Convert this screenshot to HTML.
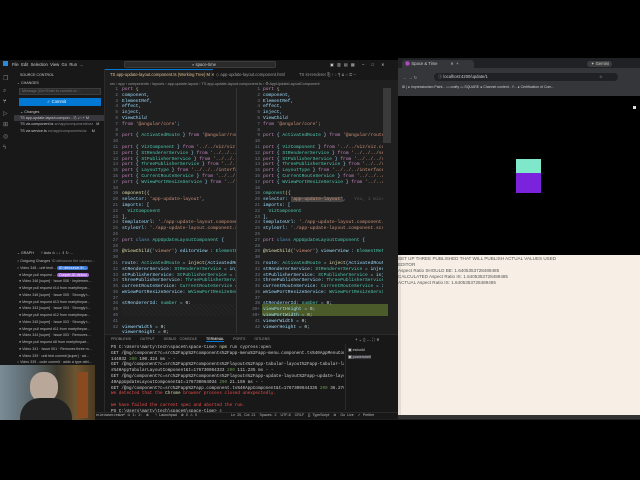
<!DOCTYPE html>
<html><head><meta charset="utf-8"><style>
*{margin:0;padding:0;box-sizing:border-box}
body{width:640px;height:480px;background:#000;position:relative;overflow:hidden;font-family:"Liberation Sans",sans-serif}
.a{position:absolute}
.code{font-family:"Liberation Mono",monospace;font-size:4.6px;line-height:5.8px;white-space:pre;color:#9cdcfe}
.ln{font-family:"Liberation Mono",monospace;font-size:4.4px;line-height:5.8px;white-space:pre;color:#6e7681;text-align:right}
.k{color:#c586c0}.s{color:#ce9178}.t{color:#4ec9b0}.y{color:#dcdcaa}.w{color:#d4d4d4}.b{color:#569cd6}
.sm{font-size:4.2px;color:#ccc;white-space:nowrap}
.term{font-family:"Liberation Mono",monospace;font-size:4.3px;line-height:5.8px;white-space:pre;color:#ccc}
</style></head><body>
<!-- VS Code -->
<div class="a" style="left:0;top:60px;width:398px;height:360px;background:#1f1f1f"></div>
<div class="a" style="left:0;top:60px;width:398px;height:9px;background:#181818"></div>
<div class="a sm" style="left:12px;top:62px;color:#ccc">File &nbsp;Edit &nbsp;Selection &nbsp;View &nbsp;Go &nbsp;Run &nbsp;…</div>
<div class="a" style="left:124px;top:61px;width:152px;height:7px;background:#2a2a2a;border:1px solid #3c3c3c;border-radius:2px"></div>
<div class="a sm" style="left:192px;top:62px">⌕ space-time</div>
<div class="a" style="left:3px;top:61px;width:5px;height:5px;background:#2c8ad6"></div>
<div class="a sm" style="left:330px;top:62px;letter-spacing:3px">▣▥▤▦ – □ ✕</div>
<!-- activity bar -->
<div class="a" style="left:0;top:69px;width:13px;height:343px;background:#181818"></div>
<div class="a" style="left:3px;top:74px;color:#888;font-size:6px;line-height:11.5px;width:8px">❐<br>⌕<br><span style="color:#ddd">⑂</span><br>▷<br>⊞<br>◎<br>ϟ</div>
<!-- sidebar -->
<div class="a" style="left:13px;top:69px;width:92px;height:343px;background:#181818;border-right:1px solid #2b2b2b"></div>
<div class="a sm" style="left:20px;top:73px;font-size:3.6px">SOURCE CONTROL</div>
<div class="a sm" style="left:17px;top:81px;font-size:3.6px">⌄ CHANGES</div>
<div class="a" style="left:19px;top:88px;width:82px;height:7px;background:#2a2a2a;border:1px solid #3c3c3c"></div>
<div class="a sm" style="left:22px;top:89px;color:#777;font-size:3.6px">Message (Ctrl+Enter to commit on '...</div>
<div class="a" style="left:19px;top:98px;width:82px;height:8px;background:#0078d4"></div>
<div class="a sm" style="left:47px;top:99px;color:#fff">✓ Commit</div>
<div class="a sm" style="left:20px;top:109px;font-size:3.8px">⌄ Changes</div>
<div class="a" style="left:14px;top:115px;width:90px;height:6px;background:#37373d"></div>
<div class="a sm" style="left:20px;top:116px;font-size:3.7px">TS app-update-layout.compon... ⎘ ↶ + M</div>
<div class="a sm" style="left:20px;top:122px;font-size:3.7px">TS viz.component.ts <span style="color:#888">src\app\components\viz</span> &nbsp;&nbsp;M</div>
<div class="a sm" style="left:20px;top:129px;font-size:3.7px">TS viz.service.ts <span style="color:#888">src\app\components\viz</span> &nbsp;&nbsp;&nbsp;&nbsp;M</div>
<div class="a sm" style="left:17px;top:251px;font-size:3.6px">⌄ GRAPH &nbsp;&nbsp;&nbsp;&nbsp;&nbsp;&nbsp;⑂ Auto ⊙ ↓ ↓ ↥ ↻ …</div>
<div class="a sm" style="left:17px;top:258px;font-size:3.6px;line-height:6.75px;color:#bbb">
○ Outgoing Changes <span style="color:#888">'ID debounce the valueso...</span><br>
○ Video 348 - unit testi... <span style="background:#3b78d8;color:#fff;border-radius:3px;padding:0 2px">ID debounce-th...</span><br>
&nbsp;&nbsp;● Merge pull request ... <span style="background:#a86ad8;color:#fff;border-radius:3px;padding:0 2px">Cooper-ID-debou</span><br>
&nbsp;&nbsp;● Video 346 [super] · Issue 006 · Implemen...<br>
&nbsp;&nbsp;● Merge pull request #14 from martythepar...<br>
&nbsp;&nbsp;● Video 346 [super] · Issue 005 · Strongly t...<br>
&nbsp;&nbsp;● Merge pull request #13 from martythepar...<br>
&nbsp;&nbsp;● Video 343 [super] · Issue 004 · Strongly t...<br>
&nbsp;&nbsp;● Merge pull request #12 from martythepar...<br>
&nbsp;&nbsp;● Video 345 [super] · Issue 003 · Strongly t...<br>
&nbsp;&nbsp;● Merge pull request #11 from martythepar...<br>
&nbsp;&nbsp;● Video 344 [super] · Issue 003 · Removes ...<br>
&nbsp;&nbsp;● Merge pull request #8 from martythepart...<br>
&nbsp;&nbsp;● Video 341 · Issue 001 · Removes three m...<br>
&nbsp;&nbsp;● Video 339 · unit test commit [super] · ad...<br>
○ Video 339 - code commit · adds a type attri...</div>
<!-- tabs -->
<div class="a" style="left:105px;top:69px;width:293px;height:11px;background:#181818"></div>
<div class="a" style="left:105px;top:69px;width:108px;height:11px;background:#1f1f1f;border-top:1px solid #0078d4"></div>
<div class="a sm" style="left:110px;top:72px;color:#e2c08d">TS app-update-layout.component.ts (Working Tree) M ✕</div>
<div class="a sm" style="left:216px;top:72px;color:#999">◇ app-update-layout.component.html</div>
<div class="a sm" style="left:299px;top:72px;color:#999">TS st-renderer ⎘ ↑ ↓ ¶ ⊛ ○ ◫ –</div>
<div class="a sm" style="left:110px;top:81px;color:#999;font-size:3.8px">src › app › components › layouts › app-update-layout › TS app-update-layout.component.ts › ⚙ AppUpdateLayoutComponent</div>
<div class="a" style="left:236px;top:88px;width:1px;height:245px;background:#333"></div>
<div class="a" style="left:383px;top:88px;width:8px;height:55px;background:#3a3a3a"></div>
<!-- left editor -->
<div class="a ln" style="left:106px;top:87px;width:12px">1
2
3
4
5
6
7
8
9
10
11
12
13
14
15
16
17
18
19
20
21
22
23
24
25
26
27
28
29
30
31
32
33
34
35
36
37
38
39
40
41
42</div>
<div class="a code" style="left:122px;top:87px;width:114px;overflow:hidden"><span class="k">port</span> <span class="y">{</span>
component,
ElementRef,
effect,
inject,
ViewChild
<span class="k">from</span> <span class="s">'@angular/core'</span>;

<span class="k">port</span> { <span class="t">ActivatedRoute</span> } <span class="k">from</span> <span class="s">'@angular/router'</span>;

<span class="k">port</span> { <span class="t">VizComponent</span> } <span class="k">from</span> <span class="s">'../../viz/viz.compon</span>
<span class="k">port</span> { <span class="t">StRendererService</span> } <span class="k">from</span> <span class="s">'../../../servic</span>
<span class="k">port</span> { <span class="t">StPublisherService</span> } <span class="k">from</span> <span class="s">'../../../servi</span>
<span class="k">port</span> { <span class="t">ThreePublisherService</span> } <span class="k">from</span> <span class="s">'../../se</span>
<span class="k">port</span> { <span class="t">LayoutType</span> } <span class="k">from</span> <span class="s">'../../../interfaces/la</span>
<span class="k">port</span> { <span class="t">CurrentRouteService</span> } <span class="k">from</span> <span class="s">'../../../serv</span>
<span class="k">port</span> { <span class="t">WViewPortResizeService</span> } <span class="k">from</span> <span class="s">'../../../s</span>

<span class="y">omponent({</span>
selector: <span class="s">'app-update-layout'</span>,
imports: [
  <span class="t">VizComponent</span>
],
templateUrl: <span class="s">'./app-update-layout.component.html</span>
styleUrl: <span class="s">'./app-update-layout.component.scss'</span>

<span class="k">port</span> <span class="b">class</span> <span class="t">AppUpdateLayoutComponent</span> {

<span class="y">@ViewChild</span>(<span class="s">'viewer'</span>) editorView : <span class="t">ElementRef</span> | u

route: <span class="t">ActivatedRoute</span> = <span class="y">inject</span>(ActivatedRoute);
stRendererService: <span class="t">StRendererService</span> = inject(St
stPublisherService: <span class="t">StPublisherService</span> = inject(
threePublisherService: <span class="t">ThreePublisherService</span> = i
currentRouteService: <span class="t">CurrentRouteService</span> = inje
wViewPortResizeService: <span class="t">WViewPortResizeService</span>

stRendererId: <span class="t">number</span> = <span class="w">0</span>;



viewerWidth = <span class="w">0</span>;
viewerHeight = <span class="w">0</span>;</div>
<div class="a" style="left:122px;top:304px;width:114px;height:12px;background:repeating-linear-gradient(45deg,#262626 0 1px,#1f1f1f 1px 3px)"></div>
<!-- right editor -->
<div class="a" style="left:262px;top:304px;width:126px;height:12px;background:#4b5b2a"></div>
<div class="a ln" style="left:248px;top:87px;width:12px">1
2
3
4
5
6
7
8
9
10
11
12
13
14
15
16
17
18
19
20
21
22
23
24
25
26
27
28
29
30
31
32
33
34
35
36
37
38
39+
40+
41
42</div>
<div class="a code" style="left:263px;top:87px;width:120px;overflow:hidden"><span class="k">port</span> <span class="y">{</span>
component,
ElementRef,
effect,
inject,
ViewChild
<span class="k">from</span> <span class="s">'@angular/core'</span>;

<span class="k">port</span> { <span class="t">ActivatedRoute</span> } <span class="k">from</span> <span class="s">'@angular/router'</span>;

<span class="k">port</span> { <span class="t">VizComponent</span> } <span class="k">from</span> <span class="s">'../../viz/viz.component'</span>;
<span class="k">port</span> { <span class="t">StRendererService</span> } <span class="k">from</span> <span class="s">'../../../services/st</span>
<span class="k">port</span> { <span class="t">StPublisherService</span> } <span class="k">from</span> <span class="s">'../../../services/s</span>
<span class="k">port</span> { <span class="t">ThreePublisherService</span> } <span class="k">from</span> <span class="s">'../../servic</span>
<span class="k">port</span> { <span class="t">LayoutType</span> } <span class="k">from</span> <span class="s">'../../../interfaces/layout/</span>
<span class="k">port</span> { <span class="t">CurrentRouteService</span> } <span class="k">from</span> <span class="s">'../../../services/</span>
<span class="k">port</span> { <span class="t">WViewPortResizeService</span> } <span class="k">from</span> <span class="s">'../../../servic</span>

<span class="t">omponent</span><span class="y">({</span>
selector: <span class="s" style="background:#444">'app-update-layout'</span>,   <span style="color:#555">You, 1 minutes ago</span>
imports: [
  <span class="t">VizComponent</span>
],
templateUrl: <span class="s">'./app-update-layout.component.html'</span>,
styleUrl: <span class="s">'./app-update-layout.component.scss'</span>

<span class="k">port</span> <span class="b">class</span> <span class="t">AppUpdateLayoutComponent</span> {

<span class="y">@ViewChild</span>(<span class="s">'viewer'</span>) viewerView : <span class="t">ElementRef</span> | undef

route: <span class="t">ActivatedRoute</span> = <span class="y">inject</span>(ActivatedRoute);
stRendererService: <span class="t">StRendererService</span> = inject(StRende
stPublisherService: <span class="t">StPublisherService</span> = inject(StPub
threePublisherService: <span class="t">ThreePublisherService</span> = inject
currentRouteService: <span class="t">CurrentRouteService</span> = inject(Cur
wViewPortResizeService: <span class="t">WViewPortResizeService</span> = inj

stRendererId: <span class="t">number</span> = <span class="w">0</span>;
viewPortHeight = <span class="w">0</span>;
viewPortWidth = <span class="w">0</span>;
viewerWidth = <span class="w">0</span>;
viewerHeight = <span class="w">0</span>;</div>
<!-- panel -->
<div class="a" style="left:105px;top:334px;width:293px;height:78px;background:#181818;border-top:1px solid #2b2b2b"></div>
<div class="a sm" style="left:111px;top:337px;color:#999;font-size:3.6px;word-spacing:2px">PROBLEMS &nbsp;&nbsp;OUTPUT &nbsp;&nbsp;DEBUG CONSOLE &nbsp;&nbsp;<span style="color:#fff;border-bottom:1px solid #0078d4">TERMINAL</span> &nbsp;&nbsp;PORTS &nbsp;&nbsp;GITLENS</div>
<div class="a sm" style="left:355px;top:337px">+ ⌄ ▯ … ⛶ ✕</div>
<div class="a" style="left:345px;top:344px;width:1px;height:66px;background:#2b2b2b"></div>
<div class="a sm" style="left:348px;top:347px;font-size:3.8px;line-height:7px">▣ esbuild<br><span style="background:#37373d">▣ powershell</span></div>
<div class="a term" style="left:111px;top:345px;width:233px;overflow:hidden">PS C:\Users\marty\tech\space6\space-time> <span class="y">npm</span> run cypress:open
GET /@ng/component?c=src%2Fapp%2Fcomponents%2Fapp-menu%2Fapp-menu.component.ts%40AppMenuComponent&t=17673
144032 <span style="color:#6a9955">200</span> 100.324 ms - -
GET /@ng/component?c=src%2Fapp%2Fcomponents%2Flayouts%2Fapp-tabular-layout%2Fapp-tabular-layout.component.t
s%40AppTabularLayoutComponent&t=176730064333 <span style="color:#6a9955">200</span> 111.235 ms - -
GET /@ng/component?c=src%2Fapp%2Fcomponents%2Flayouts%2Fapp-update-layout%2Fapp-update-layout.component.ts%
40AppUpdateLayoutComponent&t=176730064034 <span style="color:#6a9955">200</span> 21.159 ms - -
GET /@ng/component?c=src%2Fapp%2Fapp.component.ts%40AppComponent&t=1767300644335 <span style="color:#6a9955">200</span> 36.276 ms - -
<span style="color:#f14c4c">We detected that the <span class="y">Chrome</span> browser process closed unexpectedly.</span>

<span style="color:#f14c4c">We have failed the current spec and aborted the run.</span>
PS C:\Users\marty\tech\space6\space-time> ▯</div>
<!-- status bar -->
<div class="a" style="left:0;top:412px;width:398px;height:7px;background:#181818;border-top:1px solid #2b2b2b"></div>
<div class="a sm" style="left:96px;top:413px;font-size:3.6px;color:#bbb;word-spacing:1px">er-browser-resize* ⊙ 1↓ 1↑ &nbsp;⊗ &nbsp;&nbsp;⑂ Launchpad &nbsp;⊗ 0 ⚠ 0 &nbsp;&nbsp;&nbsp;&nbsp;&nbsp;&nbsp;&nbsp;&nbsp;&nbsp;&nbsp;&nbsp;&nbsp;&nbsp;&nbsp;&nbsp;&nbsp;Ln 20, Col 21 &nbsp;Spaces: 2 &nbsp;UTF-8 &nbsp;CRLF &nbsp;{} TypeScript &nbsp;⊚ &nbsp;Go Live &nbsp;✓ Prettier</div>
<!-- webcam -->
<div class="a" style="left:0;top:365px;width:95px;height:55px;background:linear-gradient(90deg,#7a8c96 0,#5d6a70 30%,#3b3a2e 60%,#6d5530 80%,#4a3a22 100%)"></div>
<div class="a" style="left:30px;top:372px;width:28px;height:30px;border-radius:45%;background:#b9a79a"></div>
<div class="a" style="left:20px;top:398px;width:52px;height:22px;border-radius:20px 20px 0 0;background:#222"></div>
<div class="a" style="left:78px;top:372px;width:10px;height:46px;background:#8a4a20"></div>
<!-- browser -->
<div class="a" style="left:398px;top:58px;width:242px;height:362px;background:#202124"></div>
<div class="a" style="left:402px;top:60px;width:72px;height:8px;background:#35363a;border-radius:3px 3px 0 0"></div>
<div class="a sm" style="left:405px;top:61px">🟣 Space &amp; Time &nbsp;&nbsp;&nbsp;&nbsp;&nbsp;&nbsp;&nbsp;&nbsp;&nbsp;&nbsp;✕ &nbsp;+</div>
<div class="a" style="left:587px;top:61px;width:25px;height:6px;background:#3c3c3c;border-radius:3px"></div>
<div class="a sm" style="left:591px;top:61px">✦ Gemini</div>
<div class="a" style="left:398px;top:68px;width:242px;height:28px;background:#35363a"></div>
<div class="a sm" style="left:403px;top:75px;color:#aaa">← → ↻</div>
<div class="a" style="left:434px;top:73px;width:184px;height:8px;background:#202124;border-radius:4px"></div>
<div class="a sm" style="left:438px;top:74px">ⓘ localhost:4200/update/1 <span style="margin-left:110px">☆</span></div>
<div class="a sm" style="left:402px;top:85px;font-size:3.5px;color:#ccc">⊞ | ● Impressionism Paint... ▭ crafty ▭ SQUARE ● Channel content - Y... ● Certification of Com...</div>
<div class="a" style="left:398px;top:96px;width:242px;height:159px;background:#000"></div>
<div class="a" style="left:633px;top:106px;width:3px;height:3px;background:#ddd"></div>
<div class="a" style="left:516px;top:159px;width:25px;height:14px;background:#7fe8cb"></div>
<div class="a" style="left:516px;top:173px;width:25px;height:20px;background:#7a22dc"></div>
<div class="a" style="left:398px;top:255px;width:242px;height:160px;background:#f7efe5"></div>
<div class="a" style="left:398px;top:255px;width:3px;height:160px;background:#e2dcd4"></div>
<div class="a" style="left:398px;top:415px;width:242px;height:4px;background:#333"></div>
<div class="a" style="left:398px;top:256px;font-size:4.6px;line-height:5.9px;color:#555;white-space:nowrap">SET UP THREE PUBLISHED THAT WILL PUBLISH ACTUAL VALUES USED<br>EDITOR<br>Aspect Ratio SHOULD BE: 1.6405353728489485<br>CALCULATED Aspect Ratio IS: 1.6405353728489485<br>ACTUAL Aspect Ratio IS: 1.6405353728489485</div>
</body></html>
